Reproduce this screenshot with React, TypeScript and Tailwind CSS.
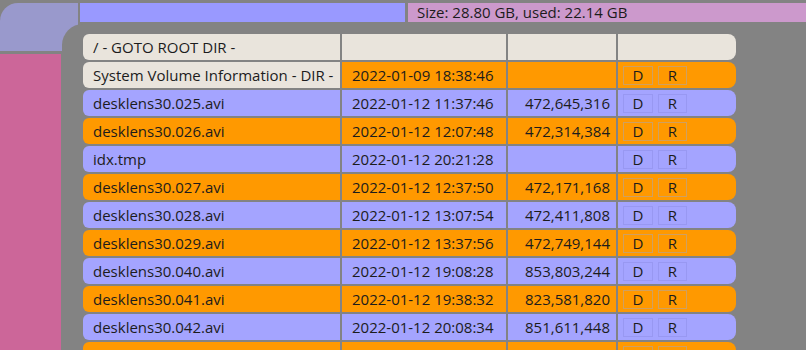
import React from "react";

type Row = {
  name: string;
  date: string;
  size: string;
  color: "o" | "l";
  dir?: boolean;
};

const rows: Row[] = [
  { name: "System Volume Information - DIR -", date: "2022-01-09 18:38:46", size: "", color: "o", dir: true },
  { name: "desklens30.025.avi", date: "2022-01-12 11:37:46", size: "472,645,316", color: "l" },
  { name: "desklens30.026.avi", date: "2022-01-12 12:07:48", size: "472,314,384", color: "o" },
  { name: "idx.tmp", date: "2022-01-12 20:21:28", size: "", color: "l" },
  { name: "desklens30.027.avi", date: "2022-01-12 12:37:50", size: "472,171,168", color: "o" },
  { name: "desklens30.028.avi", date: "2022-01-12 13:07:54", size: "472,411,808", color: "l" },
  { name: "desklens30.029.avi", date: "2022-01-12 13:37:56", size: "472,749,144", color: "o" },
  { name: "desklens30.040.avi", date: "2022-01-12 19:08:28", size: "853,803,244", color: "l" },
  { name: "desklens30.041.avi", date: "2022-01-12 19:38:32", size: "823,581,820", color: "o" },
  { name: "desklens30.042.avi", date: "2022-01-12 20:08:34", size: "851,611,448", color: "l" },
  { name: "desklens30.043.avi", date: "2022-01-12 20:38:36", size: "851,372,020", color: "o" },
];

function Btn({ label, color }: { label: string; color: "o" | "l" }) {
  return (
    <div
      className={
        "h-[19px] flex items-center justify-center border " +
        (color === "o" ? "border-[#d0a060]" : "border-[#9898f2]")
      }
      style={{ width: label === "D" ? 30 : 29 }}
    >
      {label}
    </div>
  );
}

export default function App() {
  return (
    <div
      className="w-[806px] h-[350px] bg-[#838383] overflow-hidden flex flex-col text-[15px] text-[#1c1c1c]"
      style={{ fontFamily: "'Open Sans', 'Noto Sans', sans-serif" }}
    >
      {/* top strip */}
      <div className="flex pt-[3px] gap-[2px] shrink-0">
        <div className="w-[78px] h-[48px] bg-[#9999cc] rounded-tl-[18px]" />
        <div className="flex-1 flex gap-[3px] h-[19px]">
          <div className="w-[325px] bg-[#9999ff]" />
          <div className="flex-1 bg-[#cc99cc] pl-[9px] flex items-center leading-none">
            Size: 28.80 GB, used: 22.14 GB
          </div>
        </div>
      </div>
      {/* lower */}
      <div className="flex mt-[-27px] flex-1 min-h-0">
        <div className="w-[61px] mt-[30px] bg-[#cc6699] shrink-0" />
        <div className="relative ml-[1px] flex-1 bg-[#838383] rounded-tl-[21px] pl-[21px] pt-[10px]">
          <div className="grid grid-cols-[257px_164px_108px_118px] gap-[2px] auto-rows-[26px]">
            <div className="bg-[#e9e4dc] rounded-l-[6px] pl-[10px] flex items-center whitespace-nowrap">
              / - GOTO ROOT DIR -
            </div>
            <div className="bg-[#e9e4dc]" />
            <div className="bg-[#e9e4dc]" />
            <div className="bg-[#e9e4dc] rounded-r-[8px]" />
            {rows.map((r, i) => {
              const bg = r.color === "o" ? "bg-[#ff9900]" : "bg-[#a4a4ff]";
              return (
                <React.Fragment key={i}>
                  <div
                    className={
                      "rounded-l-[6px] pl-[10px] flex items-center whitespace-nowrap " +
                      (r.dir ? "bg-[#e9e4dc]" : bg)
                    }
                  >
                    {r.name}
                  </div>
                  <div className={"pl-[10px] flex items-center whitespace-nowrap " + bg}>{r.date}</div>
                  <div className={"pr-[6px] flex items-center justify-end whitespace-nowrap " + bg}>
                    {r.size}
                  </div>
                  <div className={"rounded-r-[8px] flex items-center pl-[5px] gap-[5px] " + bg}>
                    <Btn label="D" color={r.color} />
                    <Btn label="R" color={r.color} />
                  </div>
                </React.Fragment>
              );
            })}
          </div>
        </div>
      </div>
    </div>
  );
}
